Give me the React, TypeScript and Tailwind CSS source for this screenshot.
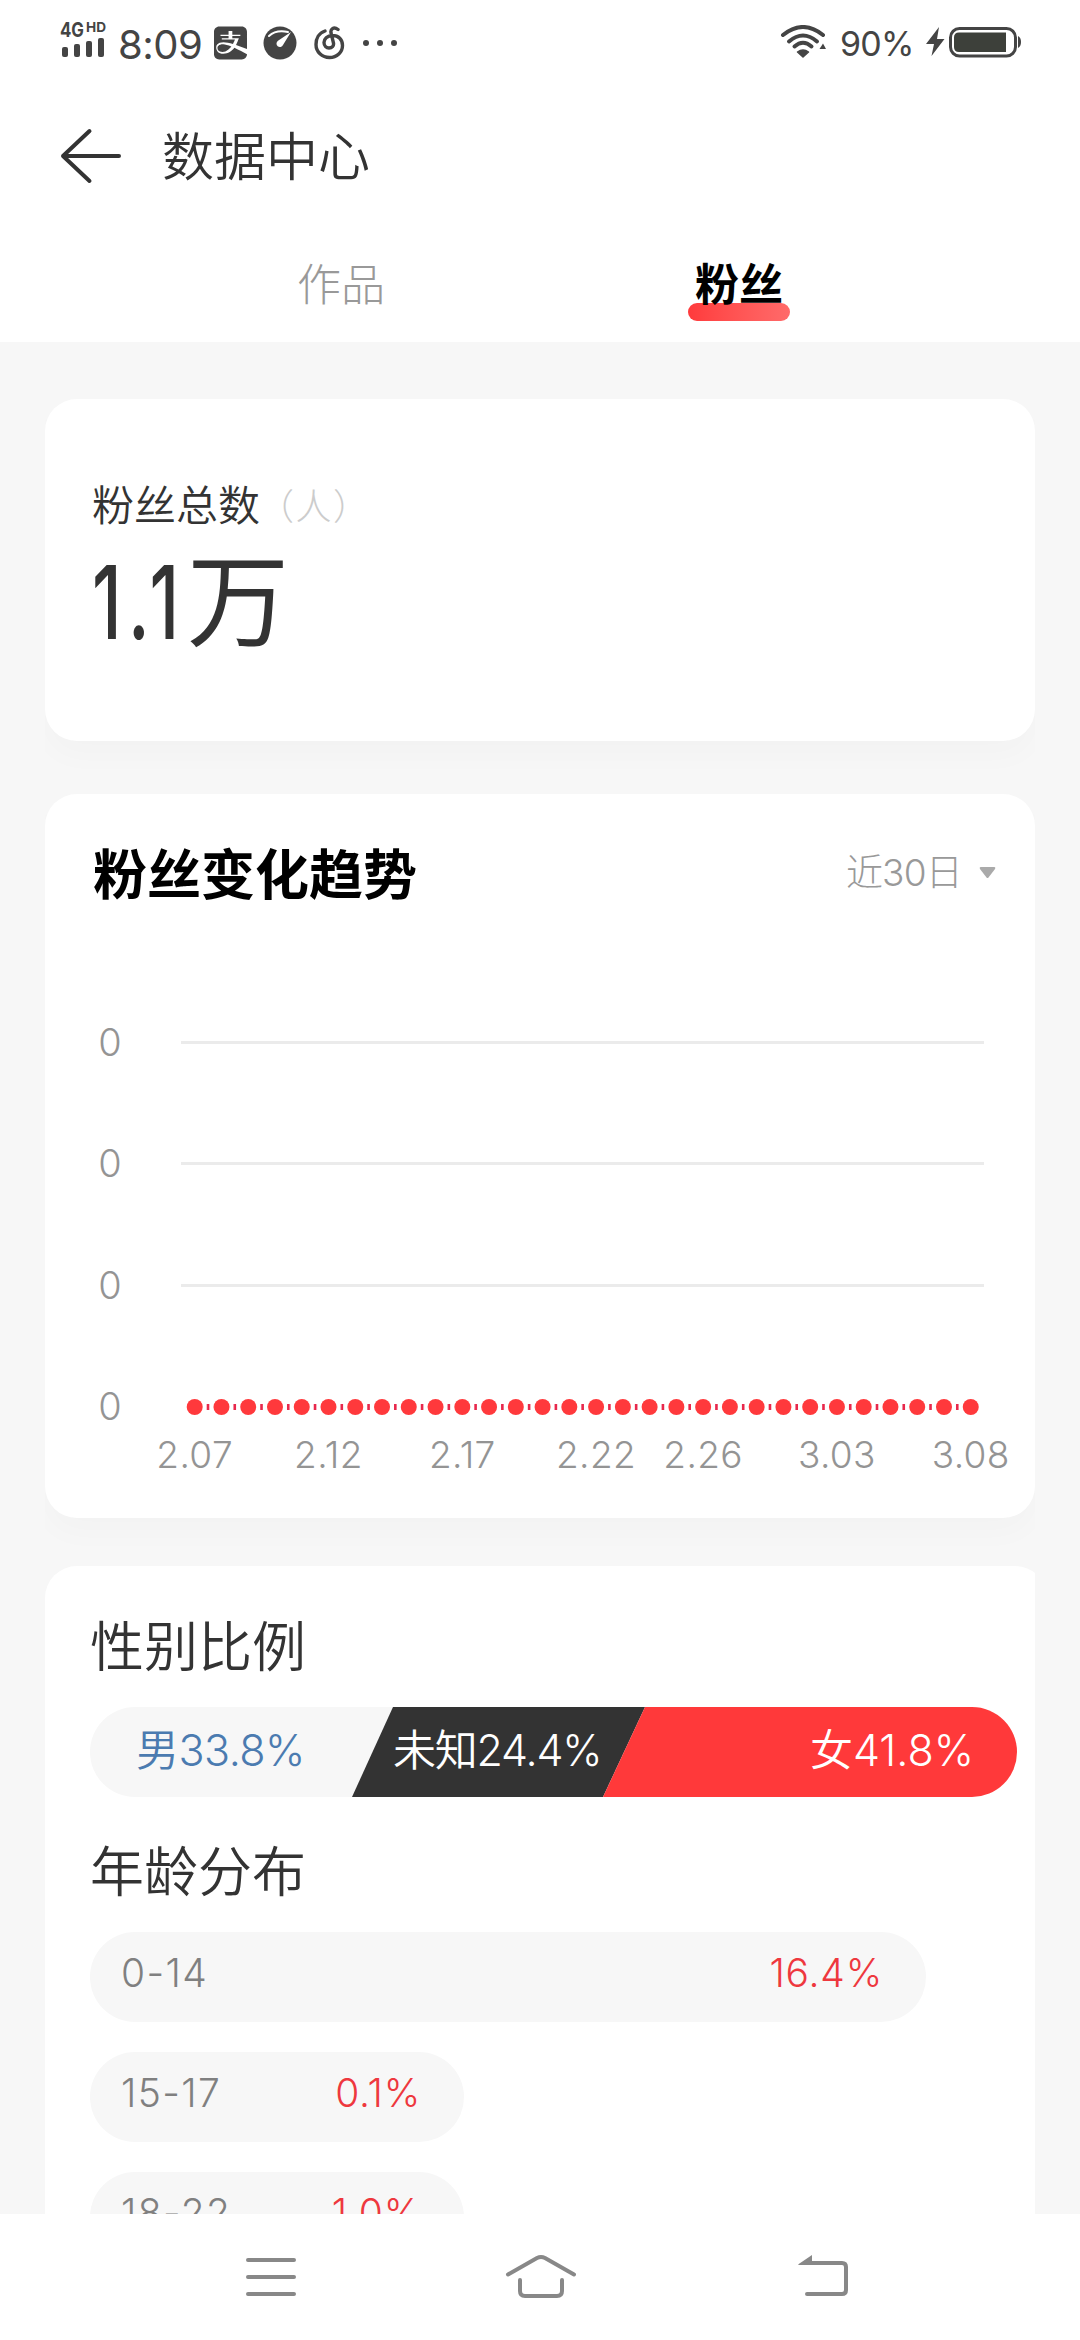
import { useState } from "react";
import { FaAlipay } from "react-icons/fa";

interface AgeGroup {
  range: string;
  percent: string;
  width: number;
}

const ageGroups: AgeGroup[] = [
  { range: "0-14", percent: "16.4%", width: 836 },
  { range: "15-17", percent: "0.1%", width: 374 },
  { range: "18-22", percent: "1.0%", width: 374 },
];

const gridRows = [63, 184, 306, 427];
const fansPerDay = Array.from({ length: 30 }, () => 0);
const dateLabels = [
  { day: 0, label: "2.07" },
  { day: 5, label: "2.12" },
  { day: 10, label: "2.17" },
  { day: 15, label: "2.22" },
  { day: 19, label: "2.26" },
  { day: 24, label: "3.03" },
  { day: 29, label: "3.08" },
];

function dayX(day: number) {
  return 149.7 + day * 26.76;
}

function StatusBar() {
  return (
    <div className="h-[88px] pl-[60px] pr-[58px] flex items-center justify-between text-[#444]">
      <div className="flex items-center">
        <svg width="48" height="56" viewBox="0 0 48 56" fill="#444">
          <text x="0" y="21" fontSize="20" fontWeight="700" textLength="24" lengthAdjust="spacingAndGlyphs">
            4G
          </text>
          <text x="26" y="16" fontSize="13.5" fontWeight="700" textLength="20" lengthAdjust="spacingAndGlyphs">
            HD
          </text>
          <rect x="2" y="31" width="6" height="10" rx="2" />
          <rect x="14" y="28" width="6" height="13" rx="2" />
          <rect x="26" y="25" width="6" height="16" rx="2" />
          <rect x="38" y="22" width="6" height="19" rx="2" />
        </svg>
        <span className="w-[84px] ml-[10px] mt-[1px] text-[40px] leading-[40px] tracking-[-0.5px]">8:09</span>
        <FaAlipay className="w-[33px] h-[38px] ml-[12px] mb-[3px]" />
        <svg className="ml-[16px] mb-[3px]" width="34" height="34" viewBox="0 0 34 34">
          <circle cx="17" cy="17" r="16.5" fill="#444" />
          <path d="M6 10 Q13 3.500 25 6" fill="none" stroke="#fff" strokeWidth="2" strokeLinecap="round" />
          <path d="M28 6 L20 19 A3.4 3.4 0 1 1 15 14.800 Z" fill="#fff" />
        </svg>
        <svg
          className="ml-[17px] mb-[3px]"
          width="31"
          height="34"
          viewBox="0 0 31 34"
          fill="none"
          stroke="#444"
          strokeWidth="3.4"
          strokeLinecap="round"
        >
          <path d="M11 5 C5 7 2 12.500 2 18.500 C2 26 8 31.500 15.500 31.500 C23 31.500 28.500 26 28.500 19.500 C28.500 13.500 24.500 9.500 18.500 9.500 C13 9.500 10 13 10 16.500 C10 20 12.500 22 15 22 C18 22 20 20 19.500 17 L17 7 C16.200 2.500 20 0.500 24 3.500" />
        </svg>
        <svg className="ml-[18px] mb-[2px]" width="34" height="6" viewBox="0 0 34 6" fill="#444">
          <circle cx="3" cy="3" r="3" />
          <circle cx="17" cy="3" r="3" />
          <circle cx="31" cy="3" r="3" />
        </svg>
      </div>

      <div className="flex items-center">
        <svg className="mb-[4px]" width="48" height="34" viewBox="0 0 48 34" fill="none" stroke="#444" strokeWidth="4" strokeLinecap="round">
          <path d="M3 10 Q23 -6 43 10" />
          <path d="M9 16.500 Q23 4.500 37 16.500" />
          <path d="M14.500 21.500 Q23 14 31.500 21.500" />
          <path d="M23 32 L17.500 27 Q23 23 28.500 27 Z" fill="#444" strokeWidth="1.500" strokeLinejoin="round" />
          <path d="M39.500 24 L43 18.500 L46 24 Z" fill="#444" stroke="none" />
        </svg>
        <span className="w-[74px] ml-[12px] mb-[1px] text-[34px] leading-[40px] tracking-[-0.8px]">90%</span>
        <svg className="ml-[12px] mb-[4px]" width="20" height="30" viewBox="0 0 20 30" fill="#444">
          <path d="M13 0 L0 17 H8 L5.500 29 L18.500 12 H11 Z" />
        </svg>
        <svg className="ml-[3px] mb-[4px]" width="73" height="31" viewBox="0 0 73 31">
          <rect x="1.500" y="1.500" width="65" height="27.500" rx="9" fill="none" stroke="#444" strokeWidth="3" />
          <path d="M10 5.500 H57 V25 H10 Q5 25 5 20 V10.500 Q5 5.500 10 5.500 Z" fill="#3d403a" />
          <path d="M69 9 Q72 10.500 72 15 Q72 19.500 69 21 Z" fill="#444" />
        </svg>
      </div>
    </div>
  );
}

function TrendChart() {
  return (
    <svg className="mt-[26px]" width="990" height="510" viewBox="0 0 990 510">
      {gridRows.map((y) => (
        <text key={y} x="65" y={y + 12.5} fontSize="38" fontWeight="300" fill="#949494" textAnchor="middle">
          0
        </text>
      ))}
      {gridRows.slice(0, 3).map((y) => (
        <line key={y} x1="136" x2="939" y1={y - 0.5} y2={y - 0.5} stroke="#ebebeb" strokeWidth="3" />
      ))}
      {fansPerDay.map((fans, day) => (
        <g key={day} fill="#ff393c">
          <circle cx={dayX(day)} cy={427 - fans} r="8" />
          {day < fansPerDay.length - 1 && (
            <rect x={dayX(day) + 12} y={424 - fans} width="2.600" height="6" fill="#e8284c" />
          )}
        </g>
      ))}
      {dateLabels.map(({ day, label }) => (
        <text
          key={label}
          x={dayX(day)}
          y="488"
          fontSize="37"
          fontWeight="300"
          letterSpacing="0.4"
          fill="#949494"
          textAnchor="middle"
        >
          {label}
        </text>
      ))}
    </svg>
  );
}

function App() {
  const [tab, setTab] = useState("fans");

  return (
    <main className="w-[1080px] h-[2340px] flex flex-col overflow-hidden bg-white text-[#333] font-['Inter','Noto_Sans_CJK_SC',sans-serif]">
      <StatusBar />

      <header className="h-[136px] pl-[60px] flex items-center">
        <svg className="mb-px" width="62" height="56" viewBox="0 0 62 56" fill="none" stroke="#333" strokeWidth="4" strokeLinecap="round" strokeLinejoin="round">
          <path d="M29.500 3 L3 28 L29.500 53 M3 28 H59" />
        </svg>
        <h1 className="ml-[40px] pt-[4px] text-[52px] leading-[60px] font-[350]">数据中心</h1>
      </header>

      <nav className="h-[118px] px-[142px] grid grid-cols-2 text-[44px]">
        <button className="pt-[4px] font-light text-[#999]" onClick={() => setTab("works")}>
          作品
        </button>
        <button className="relative pt-[4px] font-bold text-black" onClick={() => setTab("fans")}>
          {tab === "fans" && (
            <span className="absolute left-[148px] top-[79px] w-[102px] h-[18px] rounded-full bg-linear-to-r from-[#ff3a3c] to-[#ff6a6a]" />
          )}
          <span className="relative">粉丝</span>
        </button>
      </nav>

      <div className="h-[1872px] px-[45px] bg-[#f7f7f7]">
        <div className="h-full pt-[57px] flex flex-col overflow-hidden">
          {/* Total fans */}
          <section className="h-[342px] shrink-0 pl-[47px] pt-[75px] rounded-[32px] bg-white shadow-[0_16px_30px_rgba(0,0,0,0.02)]">
            <div className="h-[60px] flex items-center">
              <span className="pt-[2px] text-[42px] font-[350]">粉丝总数</span>
              <span className="text-[36px] font-light tracking-[1.5px] text-[#ccc] pt-[5px] -ml-[2px]">（人）</span>
            </div>
            <div className="h-[136px] flex items-center leading-[136px]">
              <span className="w-[95px] text-[102px] font-medium">
                <span className="inline-block origin-left scale-x-[0.7] tracking-[9px]">1.1</span>
              </span>
              <span className="text-[102px]">万</span>
            </div>
          </section>

          {/* Trend */}
          <section className="h-[724px] mt-[53px] shrink-0 rounded-[32px] bg-white shadow-[0_16px_30px_rgba(0,0,0,0.02)]">
            <div className="h-[160px] pl-[48px] pr-[39px] flex items-center justify-between">
              <h2 className="pt-[3px] text-[54px] font-bold text-black">粉丝变化趋势</h2>
              <button className="flex items-center gap-[17px] pb-[3px] text-[37px] font-light tracking-[-0.8px] text-[#999]">
                近30日
                <svg width="17" height="12" viewBox="0 0 17 12" fill="#aaa">
                  <path d="M1.500 0 H15.500 Q17 0.500 16 2 L9.500 10.500 Q8.500 11.500 7.500 10.500 L1 2 Q0 0.500 1.500 0 Z" />
                </svg>
              </button>
            </div>
            <TrendChart />
          </section>

          {/* Gender and age */}
          <section className="w-[1002px] h-[1000px] mt-[48px] shrink-0 pl-[45px] pt-[52px] rounded-[32px] bg-white">
            <h2 className="text-[54px] leading-[60px] font-[350]">性别比例</h2>
            <div className="relative w-[927px] h-[90px] mt-[29px] flex rounded-full overflow-hidden bg-[#f7f7f7] text-[43px] leading-[86px] font-[350]">
              <svg className="absolute inset-0" width="927" height="90" viewBox="0 0 927 90">
                <path d="M303 0 H555 L513 90 H262 Z" fill="#333" />
                <path d="M555 0 H927 V90 H513 Z" fill="#ff393a" />
              </svg>
              <span className="relative w-[256px] pl-[46px] tracking-[-0.5px] text-[#4b7bb0]">男33.8%</span>
              <span className="relative w-[300px] pl-[47px] tracking-[-1.2px] text-white">未知24.4%</span>
              <span className="relative flex-1 pr-[43px] text-right text-white">女41.8%</span>
            </div>
            <h2 className="mt-[46px] text-[54px] leading-[60px] font-[350]">年龄分布</h2>
            <div className="mt-[29px] flex flex-col gap-[30px]">
              {ageGroups.map((group) => (
                <div
                  key={group.range}
                  className="h-[90px] pl-[31px] pr-[43px] flex justify-between rounded-full bg-[#f7f7f7] text-[39px] leading-[82px] font-light"
                  style={{ width: group.width }}
                >
                  <span className="tracking-[1.4px] text-[#808080]">{group.range}</span>
                  <span className="tracking-[0.8px] text-[#ee383e]">{group.percent}</span>
                </div>
              ))}
            </div>
          </section>
        </div>
      </div>

      <footer className="h-[126px] px-[244px] pb-px flex items-center justify-between">
        <svg width="54" height="46" viewBox="0 0 54 46" stroke="#888" strokeWidth="4" strokeLinecap="round">
          <path d="M4 6 H50 M4 23 H50 M4 40 H50" />
        </svg>
        <svg className="mr-[13px]" width="72" height="46" viewBox="0 0 72 46" fill="none" stroke="#888" strokeWidth="4" strokeLinecap="round" strokeLinejoin="round">
          <path d="M3 20.500 L32 4 Q36 2 40 4 L69 20.500" />
          <path d="M15 26 V37 Q15 42 20 42 H52 Q57 42 57 37 V26" />
        </svg>
        <svg className="-mr-[15px]" width="54" height="46" viewBox="0 0 54 46" fill="none" stroke="#888" strokeWidth="4" strokeLinecap="round">
          <path d="M10 9 H45 Q49 9 49 13 V36 Q49 40 45 40 H10" />
          <path d="M1 10.500 L15 1 V11 H2 Z" fill="#888" stroke="none" />
        </svg>
      </footer>
    </main>
  );
}

export default App;
